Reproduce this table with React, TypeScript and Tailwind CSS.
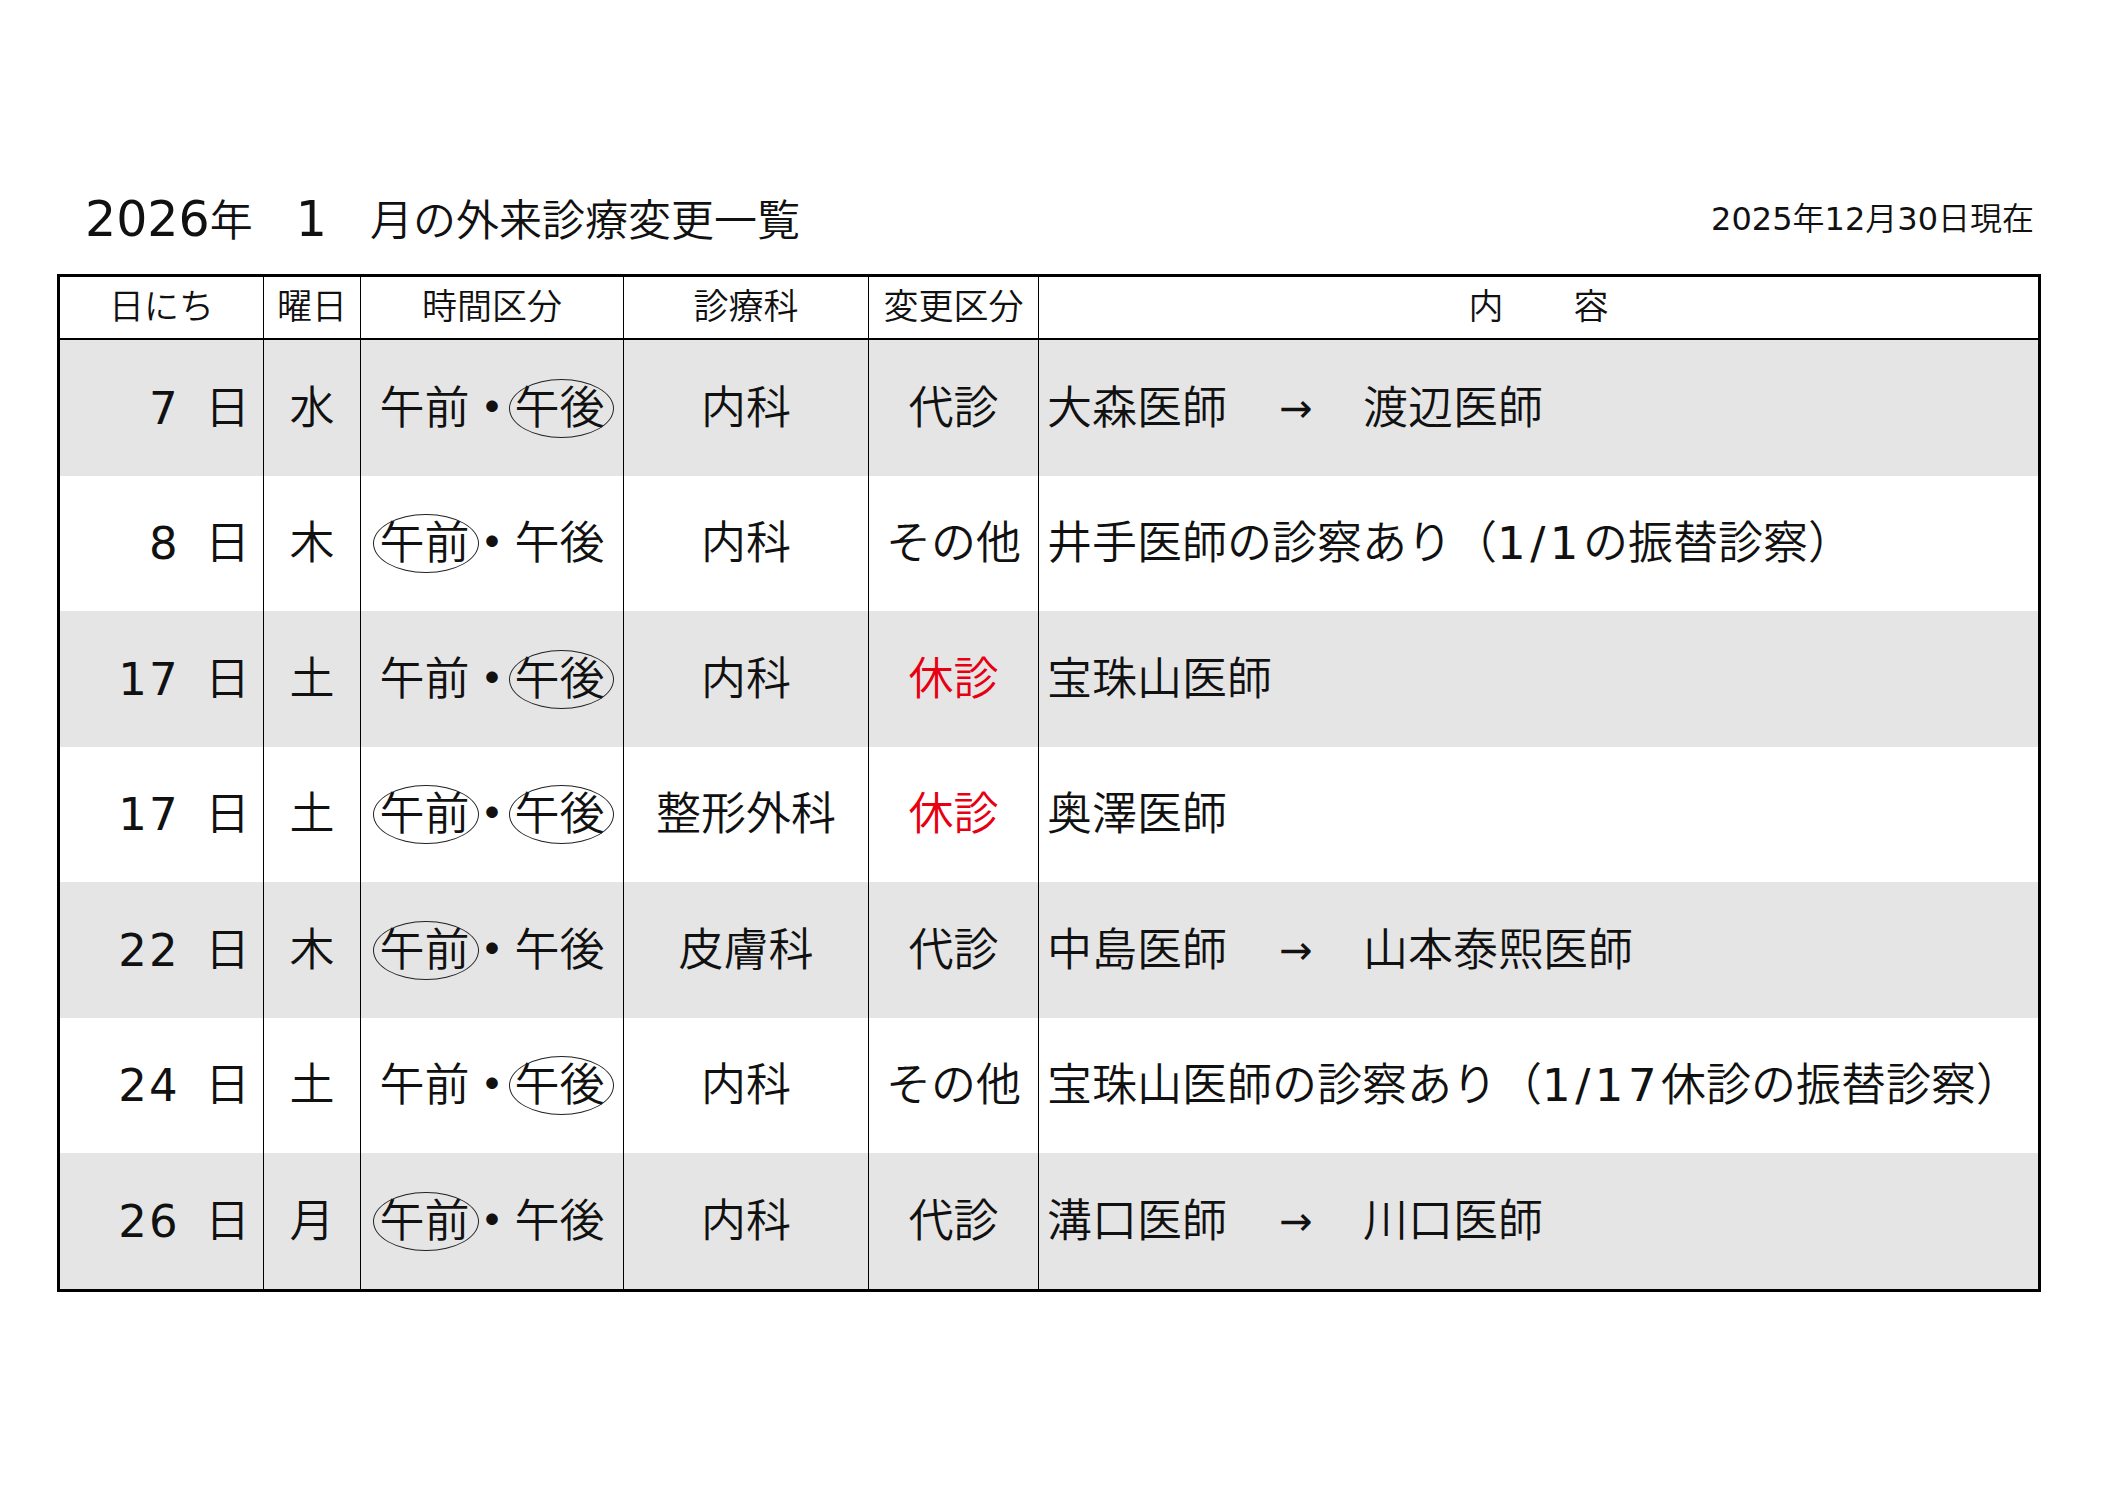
import React from "react";

type Mark = "am" | "pm" | "both";

type Row = {
  day: string;
  weekday: string;
  mark: Mark;
  dept: string;
  kind: string;
  closed?: boolean;
  note?: string;
  from?: string;
  to?: string;
};

const rows: Row[] = [
  { day: "7", weekday: "水", mark: "pm", dept: "内科", kind: "代診", from: "大森医師", to: "渡辺医師" },
  { day: "8", weekday: "木", mark: "am", dept: "内科", kind: "その他", note: "井手医師の診察あり（1/1の振替診察）" },
  { day: "17", weekday: "土", mark: "pm", dept: "内科", kind: "休診", closed: true, note: "宝珠山医師" },
  { day: "17", weekday: "土", mark: "both", dept: "整形外科", kind: "休診", closed: true, note: "奥澤医師" },
  { day: "22", weekday: "木", mark: "am", dept: "皮膚科", kind: "代診", from: "中島医師", to: "山本泰熙医師" },
  { day: "24", weekday: "土", mark: "pm", dept: "内科", kind: "その他", note: "宝珠山医師の診察あり（1/17休診の振替診察）" },
  { day: "26", weekday: "月", mark: "am", dept: "内科", kind: "代診", from: "溝口医師", to: "川口医師" },
];

// digit runs get the regular weight (and a bit of spacing in the notes)
function Txt({ text, digits }: { text: string; digits: string }) {
  const parts = text.split(/([0-9/]+)/);
  return (
    <span>
      {parts.map((p, i) =>
        /^[0-9/]+$/.test(p) ? (
          <span key={i} className={digits}>
            {p}
          </span>
        ) : (
          <React.Fragment key={i}>{p}</React.Fragment>
        )
      )}
    </span>
  );
}

function Circled({ on, children }: { on: boolean; children: React.ReactNode }) {
  return (
    <span className="relative inline-block leading-none">
      {children}
      {on && (
        <span className="absolute -left-[6px] -right-[9px] -top-[7px] -bottom-[7px] rounded-[50%] border border-[#222]" />
      )}
    </span>
  );
}

function TimeSlot({ mark }: { mark: Mark }) {
  return (
    <div className="flex items-center">
      <Circled on={mark === "am" || mark === "both"}>午前</Circled>
      <span className="inline-block w-[45px] text-center font-bold leading-none">・</span>
      <Circled on={mark === "pm" || mark === "both"}>午後</Circled>
    </div>
  );
}

export default function App() {
  return (
    <div className="min-h-screen w-full bg-white text-[#111] font-[350] font-['DejaVu_Sans','Noto_Sans_CJK_JP',sans-serif]">
      {/* Title */}
      <div className="flex h-[244px] items-end justify-between pl-[85px] pr-[71px]">
        <h1 className="text-[43px] font-[350] leading-none">
          <span className="text-[49px] font-normal">2026</span>年　<span className="text-[49px] font-normal">1</span>　月の外来診療変更一覧
        </h1>
        <div className="pb-[9px] text-[32px] leading-none">
          <Txt text="2025年12月30日現在" digits="font-normal" />
        </div>
      </div>

      {/* Table */}
      <div className="ml-[57px] mt-[30px] w-[1984px] border-[3px] border-black">
        <div className="grid h-[63px] grid-cols-[203px_97px_263px_245px_170px_1fr] border-b-2 border-black text-[35px] leading-none">
          <div className="flex items-center justify-center">日にち</div>
          <div className="flex items-center justify-center border-l border-black">曜日</div>
          <div className="flex items-center justify-center border-l border-black">時間区分</div>
          <div className="flex items-center justify-center border-l border-black">診療科</div>
          <div className="flex items-center justify-center border-l border-black">変更区分</div>
          <div className="flex items-center justify-center border-l border-black">内　　容</div>
        </div>

        {rows.map((r, i) => (
          <div
            key={i}
            className={`grid grid-cols-[203px_97px_263px_245px_170px_1fr] text-[45px] leading-none ${
              i % 2 === 0 ? "h-[136px] bg-[#e5e5e5]" : "h-[135px] bg-white"
            }`}
          >
            {/* 日にち */}
            <div className="flex items-center justify-end gap-[25px] pr-[13px]">
              <span className="font-normal tracking-[0.05em]">{r.day}</span>
              <span>日</span>
            </div>
            {/* 曜日 */}
            <div className="flex items-center justify-center border-l border-black">{r.weekday}</div>
            {/* 時間区分 */}
            <div className="flex items-center justify-center border-l border-black">
              <TimeSlot mark={r.mark} />
            </div>
            {/* 診療科 */}
            <div className="flex items-center justify-center border-l border-black">{r.dept}</div>
            {/* 変更区分 */}
            <div
              className={`flex items-center justify-center border-l border-black ${
                r.closed ? "text-[#e60012]" : ""
              }`}
            >
              {r.kind}
            </div>
            {/* 内容 */}
            <div className="flex items-center border-l border-black pl-[8px] whitespace-nowrap">
              {r.note ? (
                <Txt text={r.note} digits="font-normal tracking-[0.1em]" />
              ) : (
                <>
                  <span>{r.from}</span>
                  <span className="ml-[45px] mr-[43px] inline-block w-[48px] text-center text-[40px] font-normal">→</span>
                  <span>{r.to}</span>
                </>
              )}
            </div>
          </div>
        ))}
      </div>
    </div>
  );
}
